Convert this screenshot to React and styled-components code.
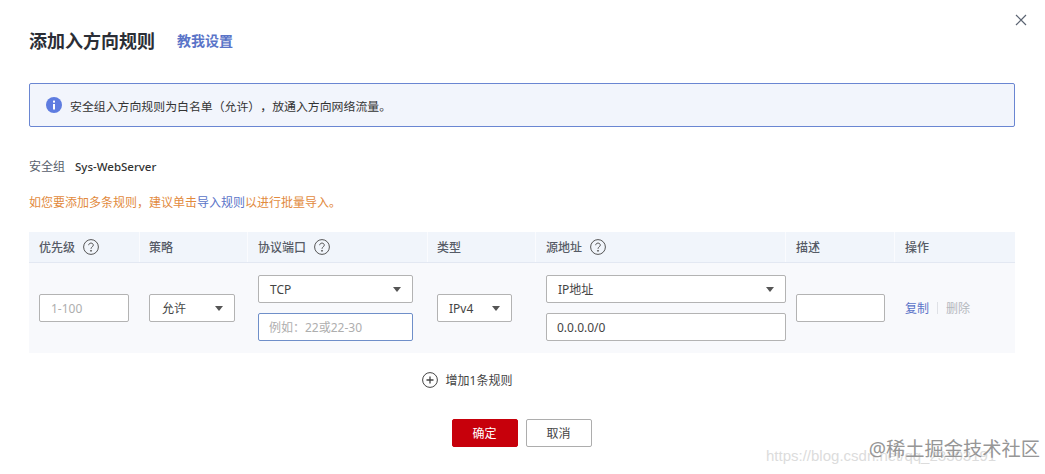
import React from "react";
import styled, { createGlobalStyle } from "styled-components";

const Global = createGlobalStyle`
  html, body { margin: 0; padding: 0; background: #fff; }
  body { font-family: "Noto Sans", "Noto Sans CJK SC", sans-serif; color: #252b3a; }
  * { box-sizing: border-box; }
`;

const Dialog = styled.div`
  position: relative;
  width: 1045px;
  height: 474px;
  padding: 0 30px 0 29px;
  overflow: hidden;
`;

const CloseButton = styled.svg`
  position: absolute;
  top: 14px;
  right: 18px;
  width: 12px;
  height: 12px;
`;

const TitleRow = styled.div`
  display: flex;
  align-items: center;
  gap: 22px;
  height: 83px;
  padding-bottom: 3px;
`;

const Title = styled.h1`
  margin: 0;
  font-size: 18px;
  font-weight: 600;
  color: #2b2e36;
`;

const HelpLink = styled.a`
  font-size: 14px;
  font-weight: 600;
  color: #5a74c8;
`;

const Notice = styled.div`
  display: flex;
  align-items: center;
  gap: 8px;
  height: 44px;
  padding-left: 16px;
  background: #f2f5fc;
  border: 1px solid #6a86d2;
  border-radius: 2px;
  font-size: 11.9px;
  text-spacing-trim: space-all;
  color: #333;
`;

const MetaRow = styled.div`
  display: flex;
  align-items: center;
  gap: 10px;
  height: 24px;
  margin-top: 27px;
  font-size: 12px;
  color: #575d6c;
`;

const GroupName = styled.span`
  font-size: 11.5px;
  font-weight: 500;
  color: #333;
`;

const Hint = styled.div`
  display: flex;
  align-items: center;
  height: 20px;
  margin-top: 14px;
  font-size: 12px;
  color: #e28a3d;
`;

const HintLink = styled.a`
  color: #5a74c8;
`;

const Table = styled.div`
  margin-top: 20px;
`;

const HeadRow = styled.div`
  display: grid;
  grid-template-columns: 110px 108px 180px 108px 250px 109px 121px;
  height: 31px;
  background: #f1f5fb;
  border-bottom: 1px solid #e3e8f2;
`;

const HeadCell = styled.div`
  display: flex;
  align-items: center;
  gap: 8px;
  padding-left: ${(p) => p.$pad || 10}px;
  font-size: 12px;
  font-weight: 500;
  color: #565b66;
  border-left: ${(p) => (p.$first ? "none" : "1px solid #fafbfe")};
`;

const BodyRow = styled.div`
  display: grid;
  grid-template-columns: 110px 108px 180px 108px 250px 109px 121px;
  height: 90px;
  background: #f8f9fc;
`;

const BodyCell = styled.div`
  display: flex;
  flex-direction: column;
  justify-content: center;
  align-items: flex-start;
  gap: 10px;
  padding-left: ${(p) => p.$pad || 10}px;
`;

const Field = styled.div`
  display: flex;
  align-items: center;
  justify-content: space-between;
  width: ${(p) => p.$w}px;
  height: 28px;
  padding: 0 ${(p) => (p.$select ? 11 : 10)}px 0 ${(p) => p.$left || 11}px;
  background: #fff;
  border: 1px solid ${(p) => (p.$active ? "#6f8fc9" : "#b3b3b3")};
  border-radius: 2px;
  font-size: 12px;
  color: ${(p) => (p.$placeholder ? "#aeaeae" : "#444")};
`;

const Caret = styled.span`
  width: 0;
  height: 0;
  border-left: 4.5px solid transparent;
  border-right: 4.5px solid transparent;
  border-top: 5px solid #555;
`;

const Actions = styled.div`
  display: flex;
  align-items: center;
  height: 100%;
  padding-left: 11px;
  font-size: 12px;
  color: #5a74c8;
`;

const Divider = styled.span`
  width: 1px;
  height: 12px;
  margin: 0 8px 0 8px;
  background: #dfe1e6;
`;

const Disabled = styled.span`
  color: #b4b7bd;
`;

const AddRow = styled.div`
  display: flex;
  align-items: center;
  justify-content: center;
  gap: 8px;
  height: 20px;
  margin-top: 17px;
  padding-right: 110px;
  font-size: 12px;
  color: #444;
`;

const Footer = styled.div`
  display: flex;
  justify-content: center;
  gap: 8px;
  margin-top: 29px;
  padding-right: 1px;
`;

const Button = styled.button`
  width: 66px;
  height: 28px;
  padding: 0;
  font-family: inherit;
  font-size: 12px;
  border-radius: 2px;
  color: ${(p) => (p.$primary ? "#fff" : "#444")};
  background: ${(p) => (p.$primary ? "#c7000b" : "#fff")};
  border: 1px solid ${(p) => (p.$primary ? "#c7000b" : "#adadad")};
`;

const Watermark = styled.div`
  position: absolute;
  right: 5px;
  top: 436px;
  font-size: 19.25px;
  line-height: 26px;
  color: #969696;
  white-space: nowrap;
`;

const BlogMark = styled.div`
  position: absolute;
  left: 766px;
  top: 447px;
  width: 279px;
  overflow: hidden;
  font-family: "Liberation Sans", sans-serif;
  font-size: 15px;
  line-height: 18px;
  color: #dcdcdc;
  white-space: nowrap;
`;

const InfoIcon = () => (
  <svg width="16" height="16" viewBox="0 0 16 16">
    <circle cx="8" cy="8" r="8" fill="#5e7ce0" />
    <rect x="7" y="7" width="2" height="5.5" fill="#fff" />
    <rect x="7" y="3.6" width="2" height="2" fill="#fff" />
  </svg>
);

const HelpIcon = () => (
  <svg width="16" height="16" viewBox="0 0 16 16" fill="none" stroke="#555" strokeWidth="1">
    <circle cx="8" cy="8" r="7.4" />
    <path d="M5.7 6.2c0-1.3 1-2.1 2.3-2.1s2.3.8 2.3 2c0 1.8-2.3 1.7-2.3 3.7" />
    <circle cx="8" cy="11.8" r=".5" fill="#555" />
  </svg>
);

const PlusIcon = () => (
  <svg width="16" height="16" viewBox="0 0 16 16" fill="none" stroke="#444" strokeWidth="1">
    <circle cx="8" cy="8" r="7.4" />
    <path d="M8 4.5v7M4.5 8h7" strokeWidth="1.3" />
  </svg>
);

export default function App() {
  return (
    <>
      <Global />
      <Dialog>
        <CloseButton viewBox="0 0 12 12" fill="none" stroke="#5b6472" strokeWidth="1.2">
          <path d="M1 1l10 10M11 1L1 11" />
        </CloseButton>

        <TitleRow>
          <Title>添加入方向规则</Title>
          <HelpLink>教我设置</HelpLink>
        </TitleRow>

        <Notice>
          <InfoIcon />
          安全组入方向规则为白名单（允许），放通入方向网络流量。
        </Notice>

        <MetaRow>
          安全组
          <GroupName>Sys-WebServer</GroupName>
        </MetaRow>

        <Hint>
          如您要添加多条规则，建议单击<HintLink>导入规则</HintLink>以进行批量导入。
        </Hint>

        <Table>
          <HeadRow>
            <HeadCell $first>优先级 <HelpIcon /></HeadCell>
            <HeadCell $pad={9}>策略</HeadCell>
            <HeadCell>协议端口 <HelpIcon /></HeadCell>
            <HeadCell $pad={9}>类型</HeadCell>
            <HeadCell>源地址 <HelpIcon /></HeadCell>
            <HeadCell>描述</HeadCell>
            <HeadCell>操作</HeadCell>
          </HeadRow>
          <BodyRow>
            <BodyCell>
              <Field $w={90} $placeholder>1-100</Field>
            </BodyCell>
            <BodyCell $pad={10}>
              <Field $w={86} $select $left={12}>允许<Caret /></Field>
            </BodyCell>
            <BodyCell $pad={11}>
              <Field $w={155} $select>TCP<Caret /></Field>
              <Field $w={155} $active $placeholder $left={10}>例如：22或22-30</Field>
            </BodyCell>
            <BodyCell $pad={10}>
              <Field $w={75} $select>IPv4<Caret /></Field>
            </BodyCell>
            <BodyCell $pad={11}>
              <Field $w={240} $select>IP地址<Caret /></Field>
              <Field $w={240} $left={10}>0.0.0.0/0</Field>
            </BodyCell>
            <BodyCell $pad={11}>
              <Field $w={89} />
            </BodyCell>
            <Actions>
              复制<Divider /><Disabled>删除</Disabled>
            </Actions>
          </BodyRow>
        </Table>

        <AddRow>
          <PlusIcon />
          增加1条规则
        </AddRow>

        <Footer>
          <Button $primary>确定</Button>
          <Button>取消</Button>
        </Footer>

        <BlogMark>https://blog.csdn.net/qq_23303191</BlogMark>
        <Watermark>@稀土掘金技术社区</Watermark>
      </Dialog>
    </>
  );
}
